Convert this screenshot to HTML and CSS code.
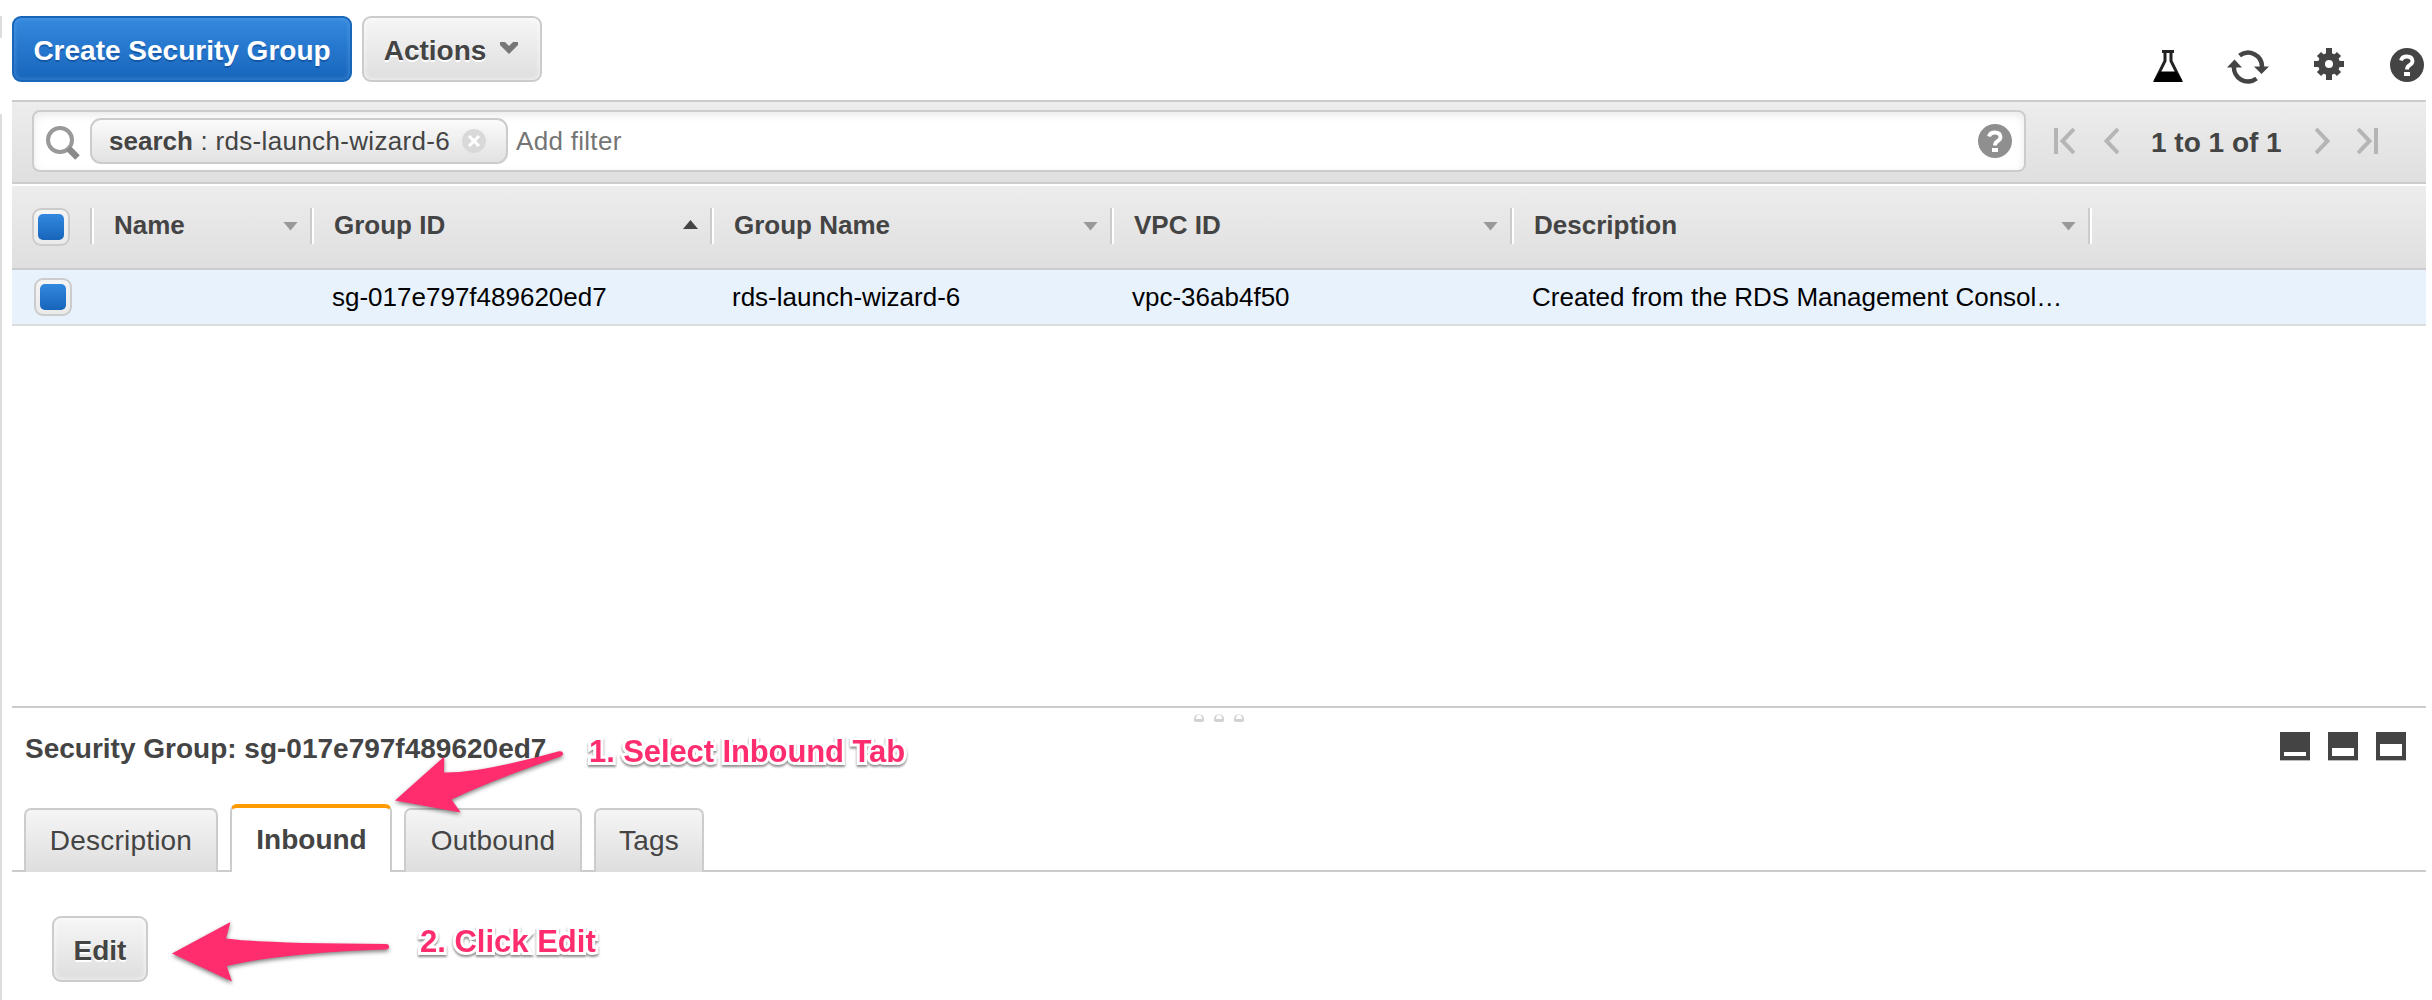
FILE: index.html
```html
<!DOCTYPE html>
<html lang="en">
<head>
<meta charset="utf-8">
<title>Security Groups</title>
<link rel="stylesheet" href="styles.css">
</head>
<body>
<main class="console">
  <header class="toolbar">
    <button class="btn primary">Create Security Group</button>
    <button class="btn actions">Actions<svg class="caret" width="20" height="14" viewBox="0 0 20 14"><path d="M1 1h5l4 4 4-4h5v3l-9 9-9-9z" fill="#777"/></svg></button>
    <div class="tools">
      <svg class="flask" width="30" height="32" viewBox="0 0 30 32"><path d="M9 1.500h12M12 2v9L3 29h24L18 11V2" fill="none" stroke="#222" stroke-width="3"/><path d="M6.500 21.500h17L30 32H0z" fill="#000"/></svg>
      <svg class="refresh" width="42" height="34" viewBox="0 0 42 34"><g fill="none" stroke="#444" stroke-width="4.500"><path d="M12.500 5.500A14 14 0 0 1 35 17"/><path d="M29.500 28.500A14 14 0 0 1 7 16"/></g><path d="M27 16.500h15l-7.500 7.500zM0 17.500h15L7.500 9.500z" fill="#444"/></svg>
      <svg class="gear" width="30" height="32" viewBox="0 0 30 32"><path d="M15 0v32M0 16h30M5 6l20 20M25 6L5 26" stroke="#444" stroke-width="6"/><circle cx="15" cy="16" r="11" fill="#444"/><circle cx="15" cy="16" r="4" fill="#fff"/></svg>
      <svg width="34" height="34" viewBox="0 0 34 34"><circle cx="17" cy="17" r="17" fill="#444"/><path d="M11 12.500Q12 8.500 17 8.500t5.500 4.500q0 2.500-2.700 4-2.800 1.500-2.800 4.500" fill="none" stroke="#fff" stroke-width="3.800"/><path d="M14 24h6v4h-6z" fill="#fff"/></svg>
    </div>
  </header>
  <section class="filterbar">
    <div class="search">
      <svg width="34" height="34" viewBox="0 0 34 34"><circle cx="14" cy="14" r="12" fill="none" stroke="#999" stroke-width="4"/><path d="M22.500 22.500l9 9" stroke="#8a8a8a" stroke-width="6.500"/></svg>
      <span class="chip"><span class="term"><b>search</b> : rds-launch-wizard-6</span><svg width="24" height="24" viewBox="0 0 24 24"><circle cx="12" cy="12" r="12" fill="#d9d9d9"/><path d="M7 7l10 10M17 7L7 17" stroke="#fff" stroke-width="3"/></svg></span>
      <span class="placeholder">Add filter</span>
      <svg class="help" width="34" height="34" viewBox="0 0 34 34"><circle cx="17" cy="17" r="17" fill="#8f8f8f"/><path d="M11 12.500Q12 8.500 17 8.500t5.500 4.500q0 2.500-2.700 4-2.800 1.500-2.800 4.500" fill="none" stroke="#fff" stroke-width="3.800"/><path d="M14 24h6v4h-6z" fill="#fff"/></svg>
    </div>
    <nav class="pager">
      <svg width="21" height="26" viewBox="0 0 21 26"><path d="M2 0v26M20 1L8.500 13 20 25" fill="none" stroke="#b5b5b5" stroke-width="4"/></svg>
      <svg class="prev" width="15" height="26" viewBox="0 0 15 26"><path d="M14 1L2.500 13 14 25" fill="none" stroke="#b5b5b5" stroke-width="4"/></svg>
      <span class="count">1 to 1 of 1</span>
      <svg class="next" width="15" height="26" viewBox="0 0 15 26"><path d="M1 1l11.500 12L1 25" fill="none" stroke="#b5b5b5" stroke-width="4"/></svg>
      <svg width="21" height="26" viewBox="0 0 21 26"><path d="M19 0v26M1 1l11.500 12L1 25" fill="none" stroke="#b5b5b5" stroke-width="4"/></svg>
    </nav>
  </section>
  <section class="grid">
    <div class="row head">
      <div class="cell check"><i class="box"></i></div>
      <div class="cell">Name<i class="sort"></i></div>
      <div class="cell">Group ID<i class="sort up"></i></div>
      <div class="cell">Group Name<i class="sort"></i></div>
      <div class="cell">VPC ID<i class="sort"></i></div>
      <div class="cell">Description<i class="sort"></i></div>
      <div class="cell"></div>
    </div>
    <div class="row data">
      <div class="cell check"><i class="box"></i></div>
      <div class="cell"></div>
      <div class="cell">sg-017e797f489620ed7</div>
      <div class="cell">rds-launch-wizard-6</div>
      <div class="cell">vpc-36ab4f50</div>
      <div class="cell">Created from the RDS Management Consol…</div>
      <div class="cell"></div>
    </div>
  </section>
  <section class="detail">
    <div class="grip"><i></i><i></i><i></i></div>
    <div class="title">
      <h2>Security Group: sg-017e797f489620ed7</h2>
      <div class="panes"><i class="small"></i><i class="half"></i><i class="full"></i></div>
    </div>
    <nav class="tabs">
      <a class="tab description">Description</a>
      <a class="tab active">Inbound</a>
      <a class="tab outbound">Outbound</a>
      <a class="tab tags">Tags</a>
    </nav>
    <button class="btn edit">Edit</button>
  </section>
  <svg class="arrow one" width="169" height="62" viewBox="0 0 169 62"><path d="M0 49.500L49.300 5.500 49 21.500Q85 22 164 .3q3.500-.6 4 2 .3 2.200-3 3.400Q92 31 56.500 48.500l9.200 13z" fill="#ff2d6e"/></svg>
  <svg class="arrow two" width="218" height="60" viewBox="0 0 218 60"><path d="M0 31.500L58.500 0 54 16.500Q90 21.500 214 22q3 0 3 2.700t-3 2.800Q110 31 54.700 44l5.300 15.500z" fill="#ff2d6e"/></svg>
  <span class="note first">1. Select Inbound Tab</span>
  <span class="note second">2. Click Edit</span>
</main>
</body>
</html>
```
FILE: styles.css
```css
* { box-sizing: border-box; }
body { margin: 0; background: #fff; color: #444; font: 26px/30px "Liberation Sans", Arial, sans-serif; }
svg { display: block; flex: none; }
i { display: block; flex: none; }

.console {
  position: relative; width: 2432px; height: 1000px; padding: 0 6px 0 12px; overflow: hidden;
  background: linear-gradient(#ddd, #ddd) 0 16px / 2px 22px no-repeat, linear-gradient(#ddd, #ddd) 0 114px / 2px 886px no-repeat, #fff;
}

/* top toolbar */
.toolbar { height: 100px; padding-top: 16px; display: flex; align-items: flex-start; gap: 10px; }
.btn {
  height: 66px; padding: 4px 0 0; display: flex; align-items: center; justify-content: center;
  font: bold 28px/32px "Liberation Sans", Arial, sans-serif; color: #444; text-shadow: 0 2px 0 #fff; white-space: nowrap;
  background: linear-gradient(#f6f6f6, #dedede); border: 2px solid #ccc; border-radius: 9px;
  box-shadow: inset 0 0 4px 1px rgba(255, 255, 255, .6);
}
.primary {
  width: 340px; color: #fff; text-shadow: 0 2px 0 rgba(0, 40, 110, .35); border-color: #1766ba;
  background: linear-gradient(#3489de, #1765bc); box-shadow: inset 0 0 4px 1px rgba(120, 180, 240, .35);
}
.actions { width: 180px; gap: 13px; padding-right: 1px; }
.caret { margin-top: -7px; }
.tools { margin-left: auto; margin-right: 2px; padding-top: 32px; display: flex; align-items: flex-start; }
.flask { margin: 2px 44px 0 0; }
.refresh { margin: 2px 45px 0 0; }
.gear { margin-right: 46px; }

/* filter bar */
.filterbar {
  height: 84px; display: flex; align-items: flex-start; padding: 8px 48px 0 20px;
  background: linear-gradient(#ededed, #dfdfdf); border-top: 2px solid #ccc; border-bottom: 2px solid #ccc;
}
.search {
  width: 1994px; height: 62px; padding: 0 12px; display: flex; align-items: center;
  background: #fff; border: 2px solid #ccc; border-radius: 8px; box-shadow: inset 0 3px 8px rgba(0, 0, 0, .09);
}
.search > svg:first-child { margin: 3px 0 0; }
.chip {
  width: 418px; height: 46px; margin-left: 10px; padding: 0 20px 0 17px; display: flex; align-items: center; justify-content: space-between;
  background: linear-gradient(#fbfbfb, #e2e2e2); border: 2px solid #ccc; border-radius: 11px; white-space: nowrap;
}
.term { letter-spacing: .33px; }
.term b { letter-spacing: 0; }
.placeholder { margin-left: 8px; color: #757575; letter-spacing: .3px; }
.help { margin-left: auto; }
.pager { flex: 1; height: 62px; margin-left: 28px; display: flex; align-items: center; }
.prev { margin-left: 29px; }
.count { width: 131px; margin: 3px 0 0 32px; font-weight: bold; font-size: 28px; white-space: nowrap; }
.next { margin: 0 27px 0 auto; }

/* table */
.row { display: grid; grid-template-columns: 78px 220px 400px 400px 400px 578px 1fr; }
.cell { display: flex; align-items: center; white-space: nowrap; }
.head {
  height: 86px; font-weight: bold; background: linear-gradient(#ededed, #dfdfdf);
  border-top: 2px solid #fff; border-bottom: 2px solid #ccc;
}
.head .cell { height: 36px; margin-top: 22px; padding: 0 12px 3px 22px; border-left: 2px solid #ccc; box-shadow: inset 2px 0 #fff; }
.head .check { height: 38px; padding: 0 0 0 20px; border: 0; box-shadow: none; }
.sort { width: 15px; height: 9px; margin: 3px 0 0 auto; background: #999; clip-path: polygon(0 0, 100% 0, 50% 100%); }
.up { margin-top: 0; background: #444; clip-path: polygon(50% 0, 100% 100%, 0 100%); }
.data { height: 56px; color: #000; background: #e8f2fd; border-bottom: 2px solid #ddd; }
.data .cell { padding-left: 22px; }
.box {
  width: 38px; height: 38px; border: 2px solid #ccc; border-radius: 9px; display: grid; place-items: center;
  background: linear-gradient(#f5f5f5, #eaeaea);
}
.box::before { content: ""; width: 26px; height: 26px; border-radius: 5px; background: linear-gradient(#3288df, #1765bb); }

/* detail pane */
.detail { margin-top: 380px; border-top: 2px solid #ccc; }
.grip { height: 15px; padding: 6px 0 0 1182px; display: flex; gap: 10px; }
.grip i { width: 10px; height: 8px; background: #fff; border: solid #d2d2d2; border-width: 1px 2px 3px; border-top-color: #e6e6e6; border-radius: 5px 5px 2px 2px; }
.title { height: 85px; padding: 9px 20px 0 13px; display: flex; justify-content: space-between; align-items: flex-start; }
.title h2 { margin: 1px 0 0; font-size: 28px; line-height: 32px; }
.panes { display: flex; gap: 18px; }
.panes i { width: 30px; height: 28px; border: solid #444; border-width: 20px 4px 4px; box-shadow: 0 1px #bbb; background: #fff; }
.panes .half { border-top-width: 16px; }
.panes .full { border-top-width: 12px; }
.tabs { height: 64px; padding-left: 12px; display: flex; align-items: flex-end; gap: 12px; font-size: 28px; line-height: 62px; letter-spacing: .2px; text-align: center; background: linear-gradient(#ccc, #ccc) 0 100% / 100% 2px no-repeat; }
.tab { height: 64px; border: 2px solid #ccc; border-bottom: 0; border-radius: 7px 7px 0 0; background: linear-gradient(#f5f5f5, #dedede); }
.description { width: 194px; }
.outbound { width: 178px; }
.tags { width: 110px; }
.active { width: 162px; height: 68px; font-weight: bold; background: #fff; border-top: 4px solid #f90; line-height: 64px; padding-left: 1px; letter-spacing: 0; }
.edit { width: 96px; margin: 44px 0 0 40px; }

/* walkthrough callouts, laid over the console */
.arrow { position: absolute; overflow: visible; filter: drop-shadow(0 2px 2px rgba(0, 0, 0, .5)); }
.one { left: 395px; top: 751px; }
.two { left: 172px; top: 922px; }
.note {
  position: absolute; font-weight: bold; font-size: 31px; line-height: 36px; color: #ff2d6e; white-space: nowrap;
  paint-order: stroke fill; -webkit-text-stroke: 6px #fff; filter: drop-shadow(0 2px 1px rgba(0, 0, 0, .45));
}
.first { left: 589px; top: 734px; letter-spacing: -.1px; }
.second { left: 420px; top: 924px; }
```
